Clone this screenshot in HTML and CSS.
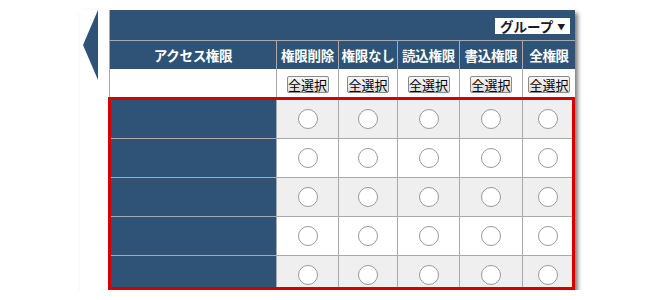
FILE: index.html
```html
<!DOCTYPE html>
<html lang="ja">
<head>
    <meta charset="UTF-8">
    <title>アクセス権限</title>
    <link rel="stylesheet" href="styles.css">
</head>
<body>

    <div class="shot">
        <div class="tab">
            <svg width="15" height="70" viewBox="0 0 15 70"><polygon points="15,0 15,70 0,35" fill="#2e5376"/></svg>
        </div>

        <div class="panel">
            <div class="topbar">
                <span class="group-select">グループ<span class="caret">▼</span></span>
            </div>

            <div class="grid head">
                <div class="cell">アクセス権限</div>
                <div class="cell">権限削除</div>
                <div class="cell">権限なし</div>
                <div class="cell">読込権限</div>
                <div class="cell">書込権限</div>
                <div class="cell">全権限</div>
            </div>

            <div class="grid btns">
                <div class="cell"></div>
                <div class="cell"><button class="pick-all">全選択</button></div>
                <div class="cell"><button class="pick-all">全選択</button></div>
                <div class="cell"><button class="pick-all">全選択</button></div>
                <div class="cell"><button class="pick-all">全選択</button></div>
                <div class="cell"><button class="pick-all">全選択</button></div>
            </div>

            <div class="picks">
                <div class="grid pick">
                    <div class="cell name"></div>
                    <div class="cell"><span class="radio"></span></div>
                    <div class="cell"><span class="radio"></span></div>
                    <div class="cell"><span class="radio"></span></div>
                    <div class="cell"><span class="radio"></span></div>
                    <div class="cell"><span class="radio"></span></div>
                </div>
                <div class="grid pick">
                    <div class="cell name"></div>
                    <div class="cell"><span class="radio"></span></div>
                    <div class="cell"><span class="radio"></span></div>
                    <div class="cell"><span class="radio"></span></div>
                    <div class="cell"><span class="radio"></span></div>
                    <div class="cell"><span class="radio"></span></div>
                </div>
                <div class="grid pick">
                    <div class="cell name"></div>
                    <div class="cell"><span class="radio"></span></div>
                    <div class="cell"><span class="radio"></span></div>
                    <div class="cell"><span class="radio"></span></div>
                    <div class="cell"><span class="radio"></span></div>
                    <div class="cell"><span class="radio"></span></div>
                </div>
                <div class="grid pick">
                    <div class="cell name"></div>
                    <div class="cell"><span class="radio"></span></div>
                    <div class="cell"><span class="radio"></span></div>
                    <div class="cell"><span class="radio"></span></div>
                    <div class="cell"><span class="radio"></span></div>
                    <div class="cell"><span class="radio"></span></div>
                </div>
                <div class="grid pick">
                    <div class="cell name"></div>
                    <div class="cell"><span class="radio"></span></div>
                    <div class="cell"><span class="radio"></span></div>
                    <div class="cell"><span class="radio"></span></div>
                    <div class="cell"><span class="radio"></span></div>
                    <div class="cell"><span class="radio"></span></div>
                </div>
            </div>
        </div>
    </div>

</body>
</html>
```

FILE: styles.css
```css
* {
    box-sizing: border-box;
}
body {
    margin: 0;
    background-color: #fff;
    font-family: "Noto Sans CJK JP", "Noto Sans", sans-serif;
}
.shot {
    display: flex;
    width: 495px;
    height: 280px;
    margin: 10px 0 0 80px;
    background-color: #fff;
    box-shadow: 3px 3px 4px rgba(0, 0, 0, 0.5);
}
.tab {
    width: 29px;
    padding-left: 3px;
}
.tab svg {
    display: block;
}
.panel {
    width: 466px;
    border-left: 1px solid #aaa;
}
.topbar {
    height: 31px;
    display: flex;
    justify-content: flex-end;
    align-items: center;
    padding-right: 5px;
    background-color: #2e5376;
    border-bottom: 1px solid #aaa;
}
.group-select {
    width: 75px;
    height: 16px;
    margin-top: 1px;
    padding-left: 5px;
    background-color: #fff;
    color: #1a1a2a;
    font-size: 13.5px;
    font-weight: bold;
    line-height: 16px;
    white-space: nowrap;
}
.caret {
    margin-left: 4px;
    font-size: 8px;
    vertical-align: 2px;
}
.grid {
    display: grid;
    grid-template-columns: 166px 62px 59px 62px 63px 53px;
}
.cell {
    display: flex;
    justify-content: center;
    align-items: center;
    border-left: 1px solid #aaa;
}
.cell:first-child {
    border-left: none;
}
.head {
    height: 28px;
    background-color: #2e5376;
    color: #fff;
    font-size: 13.5px;
    font-weight: bold;
    letter-spacing: -0.3px;
}
.btns {
    height: 28px;
    background-color: #fff;
}
.pick-all {
    width: 42px;
    height: 17px;
    margin-top: 3px;
    padding: 0;
    border: 1px solid #8a8a8a;
    border-radius: 2px;
    background: linear-gradient(#f7f7f7, #dcdcdc);
    color: #000;
    font-family: "Noto Sans CJK JP", sans-serif;
    font-size: 13px;
    line-height: 15px;
    white-space: nowrap;
}
.picks {
    width: 467px;
    height: 193px;
    margin-left: -2px;
    border: 3px solid #d40000;
    overflow: hidden;
}
.picks .grid {
    grid-template-columns: 165px 62px 59px 62px 63px 50px;
}
.pick {
    height: 39px;
    border-bottom: 1px solid #aaa;
    background-color: #efefef;
}
.pick:nth-child(even) {
    background-color: #fff;
}
.name {
    background-color: #2e5376;
}
.radio {
    width: 20px;
    height: 20px;
    border: 1px solid #999;
    border-radius: 50%;
    background-color: #fff;
}
```
